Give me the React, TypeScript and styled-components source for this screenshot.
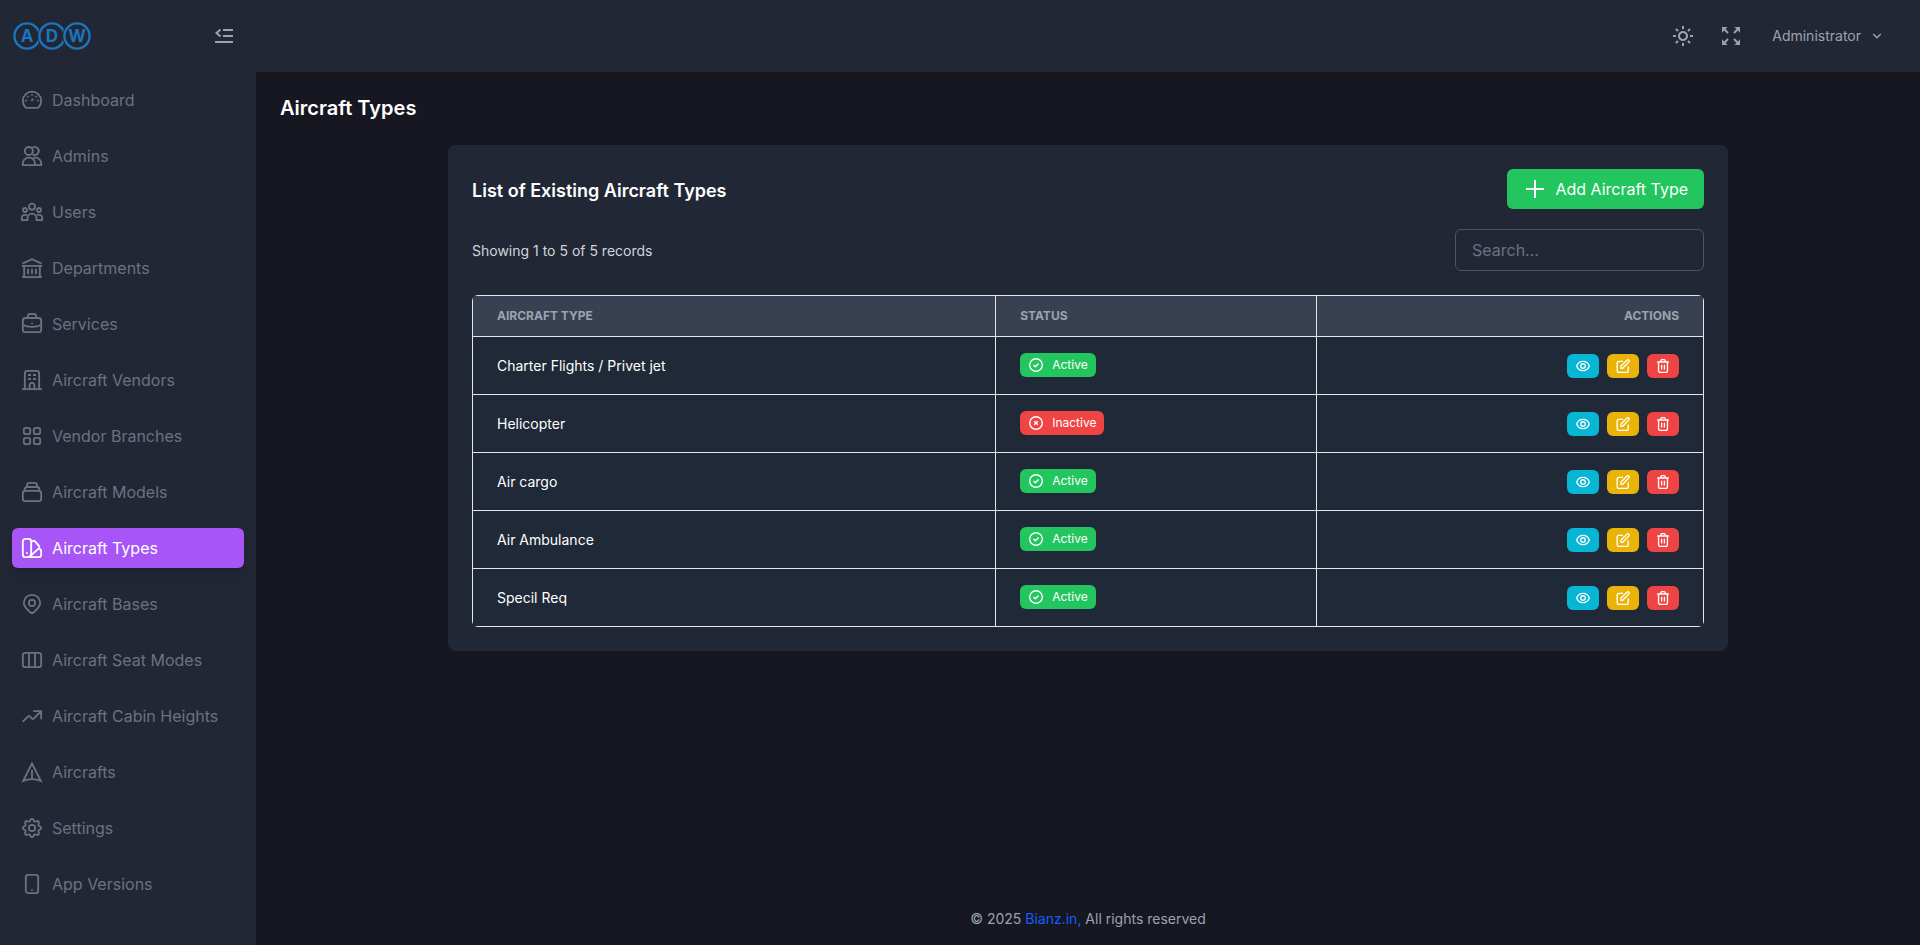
import React, { useState } from "react";
import styled, { createGlobalStyle, css } from "styled-components";
import { BiExpand, BiSun } from "react-icons/bi";
import { RiArrowDownSLine } from "react-icons/ri";

const color = {
  page: "#161721",
  panel: "#222736",
  row: "#1f2937",
  head: "#374151",
  line: "#e5e7eb",
  muted: "#6b7280",
  soft: "#9ca3af",
  purple: "#a855f7",
  green: "#22c55e",
  red: "#ef4444",
  cyan: "#06b6d4",
  yellow: "#eab308",
  link: "#155dfc",
  logo: "#1c75bc",
};

const GlobalStyle = createGlobalStyle`
  *, *::before, *::after { box-sizing: border-box; }
  body {
    margin: 0;
    background: ${color.page};
    color: #fff;
    font-family: Inter, "Liberation Sans", sans-serif;
    font-size: 16px;
    line-height: 24px;
  }
  button, input { font: inherit; color: inherit; }
  h1, h2, p { margin: 0; }
`;

const Shell = styled.div`
  display: grid;
  grid-template-columns: 256px minmax(0, 1fr);
  min-height: 100vh;
`;

const Sidebar = styled.aside`
  background: ${color.panel};
  padding: 0 12px 24px;
`;

const Brand = styled.div`
  display: flex;
  align-items: center;
  justify-content: space-between;
  height: 72px;
`;

const Main = styled.div`
  display: flex;
  flex-direction: column;
  min-height: 100vh;
`;

const IconButton = styled.button<{ $size: number }>`
  display: inline-flex;
  align-items: center;
  justify-content: center;
  width: ${(p) => p.$size}px;
  height: ${(p) => p.$size}px;
  padding: 0;
  border: 0;
  background: transparent;
  color: ${color.soft};
  cursor: pointer;
`;

const NavList = styled.ul`
  display: flex;
  flex-direction: column;
  gap: 16px;
  margin: 0;
  padding: 8px 0 0;
  list-style: none;
`;

const NavLink = styled.a<{ $active: boolean }>`
  display: flex;
  align-items: center;
  gap: 10px;
  height: 40px;
  padding: 0 10px;
  border-radius: 6px;
  color: ${color.muted};
  text-decoration: none;
  white-space: nowrap;
  ${(p) =>
    p.$active &&
    css`
      background: ${color.purple};
      color: #fff;
      box-shadow: 0 10px 15px -3px rgba(0, 0, 0, 0.1), 0 4px 6px -4px rgba(0, 0, 0, 0.1);
    `}
`;

const Glyph = styled.svg`
  flex: none;
  overflow: visible;
  fill: none;
  stroke: currentColor;
  stroke-width: 2.2;
`;

const Topbar = styled.header`
  display: flex;
  align-items: center;
  justify-content: flex-end;
  gap: 24px;
  height: 72px;
  padding: 0 30px;
  background: ${color.panel};
`;

const UserButton = styled.button`
  display: inline-flex;
  align-items: center;
  gap: 8px;
  padding: 0 5px;
  border: 0;
  background: transparent;
  color: ${color.soft};
  font-size: 14px;
  line-height: 20px;
  cursor: pointer;
`;

const Content = styled.main`
  flex: 1;
  padding: 24px;
`;

const PageTitle = styled.h1`
  margin-bottom: 24px;
  font-size: 20px;
  font-weight: 600;
  line-height: 25px;
`;

const Card = styled.section`
  max-width: 1280px;
  margin: 0 auto;
  padding: 24px;
  border-radius: 8px;
  background: ${color.panel};
`;

const CardRow = styled.div<{ $gap: number }>`
  display: flex;
  align-items: center;
  justify-content: space-between;
  margin-bottom: ${(p) => p.$gap}px;
`;

const CardTitle = styled.h2`
  padding-top: 4px;
  font-size: 18px;
  font-weight: 600;
  line-height: 28px;
`;

const AddButton = styled.button`
  display: inline-flex;
  align-items: center;
  gap: 8px;
  height: 40px;
  padding: 0 16px;
  border: 0;
  border-radius: 6px;
  background: ${color.green};
  color: #fff;
  cursor: pointer;
`;

const Summary = styled.p`
  padding-top: 2px;
  color: #d1d5db;
  font-size: 14px;
  line-height: 20px;
`;

const SearchInput = styled.input`
  width: 249px;
  height: 42px;
  padding: 0 16px;
  border: 1px solid #4b5563;
  border-radius: 6px;
  background: transparent;
  &::placeholder {
    color: ${color.muted};
    opacity: 1;
  }
`;

const TableFrame = styled.div`
  overflow: hidden;
  border-radius: 6px;
`;

const Table = styled.table`
  width: 100%;
  border-collapse: collapse;
  table-layout: fixed;
  background: ${color.row};
  font-size: 14px;
  line-height: 24px;
`;

const HeadCell = styled.th<{ $width: string; $right?: boolean }>`
  width: ${(p) => p.$width};
  padding: 12px 24px;
  border: 1px solid ${color.line};
  background: ${color.head};
  color: ${color.soft};
  font-size: 12px;
  font-weight: 700;
  line-height: 16px;
  text-align: ${(p) => (p.$right ? "right" : "left")};
  text-transform: uppercase;
`;

const Cell = styled.td`
  padding: 17px 24px 16px;
  border: 1px solid ${color.line};
`;

const StatusCell = styled(Cell)`
  padding: 16px 24px 17px;
`;

const Badge = styled.span<{ $active: boolean }>`
  display: flex;
  align-items: center;
  gap: 8px;
  width: fit-content;
  height: 24px;
  padding: 0 8px;
  border-radius: 6px;
  background: ${(p) => (p.$active ? color.green : color.red)};
  font-size: 12px;
  line-height: 16px;
`;

const Actions = styled.div`
  display: flex;
  justify-content: flex-end;
  gap: 8px;
`;

const ActionButton = styled.button<{ $bg: string }>`
  display: inline-flex;
  align-items: center;
  justify-content: center;
  width: 32px;
  height: 24px;
  padding: 0;
  border: 0;
  border-radius: 6px;
  background: ${(p) => p.$bg};
  color: #fff;
  cursor: pointer;
`;

const Footer = styled.footer`
  padding: 16px;
  color: ${color.soft};
  font-size: 14px;
  line-height: 20px;
  text-align: center;
`;

const FooterLink = styled.a`
  color: ${color.link};
  text-decoration: none;
`;

// Eight-lobed outline of the settings gear.
const gearOutline = (() => {
  const points: string[] = [];
  for (let i = 0; i < 96; i++) {
    const t = (i / 96) * Math.PI * 2;
    const r = 9.7 + 1.3 * Math.cos(8 * t);
    points.push(`${(12 + r * Math.sin(t)).toFixed(2)} ${(12 - r * Math.cos(t)).toFixed(2)}`);
  }
  return `M${points.join("L")}z`;
})();

const navIcons: Record<string, React.ReactNode> = {
  Dashboard: (
    <>
      <path d="M5.6 21.4h12.8c.6 0 1.1-.2 1.5-.7a11 11 0 1 0-15.8 0c.4.5.9.7 1.5.7z" />
      <path d="M12 5v2M6.600 7.400l1.200 1.200M17.400 7.400l-1.200 1.200M3.800 12.800h2M18.200 12.800h2M11.400 13.200l1.800-2.600" />
    </>
  ),
  Admins: (
    <>
      <circle cx="8.2" cy="6" r="4.8" />
      <path d="M12.6 2a4.8 4.8 0 1 1 0 8" />
      <path d="M1 23v-2a7 7 0 0 1 7-7h.6a7 7 0 0 1 7 7v2zM13.4 14H16a7 7 0 0 1 7 7v2h-7.4" />
    </>
  ),
  Users: (
    <>
      <circle cx="12" cy="5.6" r="3.6" />
      <circle cx="3.6" cy="9.6" r="2.4" />
      <circle cx="20.4" cy="9.6" r="2.4" />
      <path d="M-.2 21.8v-3a3.3 3.3 0 0 1 3.300-3.300H6M24.200 21.800v-3a3.300 3.300 0 0 0-3.300-3.300H18M6.600 21.800v-2.500a5.400 5.400 0 0 1 10.800 0v2.500M-1.200 21.800h9M16.200 21.800h9" />
    </>
  ),
  Departments: (
    <path d="M.4 6.8L12 1.4l11.6 5.4M0 9.4h24M0 23h24M2.6 9v14M21.4 9v14M7.2 13v6.4M12 13v6.4M16.8 13v6.4" />
  ),
  Services: (
    <>
      <rect x="1" y="4.8" width="22" height="17" rx="3" />
      <path d="M7 4.6V3a3 3 0 0 1 3-3h4a3 3 0 0 1 3 3v1.6M1 13.2c3 1.6 7 2.3 11 2.3s8-.7 11-2.3M12 10.4v2" />
    </>
  ),
  "Aircraft Vendors": (
    <path d="M3.4 23V4a3 3 0 0 1 3-3h11.2a3 3 0 0 1 3 3v19M0 23h24M7.2 6h3.6M13.2 6h3.6M7.2 10.8h3.6M13.2 10.8h3.6M9.2 23v-5.2a2.2 2.2 0 0 1 2.2-2.2h1.2a2.2 2.2 0 0 1 2.2 2.2V23" />
  ),
  "Vendor Branches": (
    <>
      <rect x="2.2" y="2.2" width="7.6" height="7.6" rx="2.4" />
      <rect x="14.2" y="2.2" width="7.6" height="7.6" rx="2.4" />
      <rect x="2.2" y="14.2" width="7.6" height="7.6" rx="2.4" />
      <rect x="14.2" y="14.2" width="7.6" height="7.6" rx="2.4" />
    </>
  ),
  "Aircraft Models": (
    <>
      <rect x="1" y="10.6" width="22" height="12.4" rx="3" />
      <path d="M3.2 10.4V9a3 3 0 0 1 3-3h11.6a3 3 0 0 1 3 3v1.4M6 6V4a3 3 0 0 1 3-3h6a3 3 0 0 1 3 3v2" />
    </>
  ),
  "Aircraft Types": (
    <>
      <path d="M4 1h4a3 3 0 0 1 3 3v14.4A4.6 4.6 0 0 1 6.4 23H4a3 3 0 0 1-3-3V4a3 3 0 0 1 3-3z" />
      <path d="M11 4.6l1.2-.7a3 3 0 0 1 4 .7l3.6 4.2a3 3 0 0 1-.3 4.2L9.4 22.2M18.6 13H20a3 3 0 0 1 3 3v4a3 3 0 0 1-3 3H6M6 17v2" />
    </>
  ),
  "Aircraft Bases": (
    <>
      <path d="M13.8 22.2a2.8 2.8 0 0 1-3.6 0C6.7 19.2 2.2 15.2 2.2 10.8a9.8 9.8 0 0 1 19.6 0c0 4.4-4.500 8.400-8 11.400z" />
      <circle cx="12" cy="10.8" r="3.8" />
    </>
  ),
  "Aircraft Seat Modes": (
    <>
      <rect x="1" y="3.4" width="22" height="17.2" rx="3" />
      <path d="M8.4 3.4v17.2M15.6 3.4v17.2" />
    </>
  ),
  "Aircraft Cabin Heights": (
    <path d="M.7 19l6.6-6.6a1.4 1.4 0 0 1 2 0l2.7 2.7a1.4 1.4 0 0 0 2 0L22.6 6.6M13.400 6.200H23v9.600" />
  ),
  Aircrafts: <path d="M12 1.8L1.4 22.7c3.4-1.4 7-2.1 10.6-2.1s7.2.7 10.6 2.1zM12 9.6v11" />,
  Settings: (
    <>
      <path d={gearOutline} />
      <circle cx="12" cy="12" r="3.8" />
    </>
  ),
  "App Versions": (
    <>
      <rect x="4.6" y="1" width="14.8" height="22" rx="3" />
      <path d="M12 18.2v2" />
    </>
  ),
};

const records = [
  { name: "Charter Flights / Privet jet", active: true },
  { name: "Helicopter", active: false },
  { name: "Air cargo", active: true },
  { name: "Air Ambulance", active: true },
  { name: "Specil Req", active: true },
];

const LogoLetter = styled.text`
  fill: ${color.logo};
  font-family: Inter, sans-serif;
  font-size: 17px;
  font-weight: 700;
  text-anchor: middle;
`;

const Logo = () => (
  <svg width="80" height="28" viewBox="0 0 80 28" role="img" aria-label="ADW">
    {[
      { x: 15, letter: "A" },
      { x: 40, letter: "D" },
      { x: 65, letter: "W" },
    ].map(({ x, letter }) => (
      <g key={letter}>
        <circle cx={x} cy="14" r="12.6" fill="none" stroke={color.panel} strokeWidth="4" />
        <circle cx={x} cy="14" r="12.6" fill="none" stroke={color.logo} strokeWidth="2.4" />
        <LogoLetter x={x} y="20">
          {letter}
        </LogoLetter>
      </g>
    ))}
  </svg>
);

const StatusIcon = ({ active }: { active: boolean }) => (
  <svg width="16" height="16" viewBox="0 0 16 16" fill="none" stroke="currentColor" strokeWidth="1.4" aria-hidden="true">
    <circle cx="8" cy="8" r="6.3" />
    <path d={active ? "M5.5 8l1.8 1.8 3.3-3.3" : "M6.2 6.2l3.6 3.6M9.8 6.2L6.2 9.8"} />
  </svg>
);

const ActionGlyph = ({ children }: { children: React.ReactNode }) => (
  <svg width="14" height="14" viewBox="0 0 24 24" fill="none" stroke="currentColor" strokeWidth="2.3" aria-hidden="true">
    {children}
  </svg>
);

const RowActions = ({ name }: { name: string }) => (
  <Actions>
    <ActionButton $bg={color.cyan} aria-label={`View ${name}`}>
      <ActionGlyph>
        <path d="M1.2 12C2.8 7.2 7 4 12 4s9.2 3.2 10.8 8c-1.6 4.8-5.8 8-10.8 8S2.8 16.8 1.2 12z" />
        <circle cx="12" cy="12" r="3.9" />
      </ActionGlyph>
    </ActionButton>
    <ActionButton $bg={color.yellow} aria-label={`Edit ${name}`}>
      <ActionGlyph>
        <path d="M12 4H5a3 3 0 0 0-3 3v13a3 3 0 0 0 3 3h13a3 3 0 0 0 3-3v-7" />
        <path d="M8.6 16v-3.8L19 1.9a2.2 2.2 0 0 1 3.1 3.1L11.6 16z" />
      </ActionGlyph>
    </ActionButton>
    <ActionButton $bg={color.red} aria-label={`Delete ${name}`}>
      <ActionGlyph>
        <path d="M2 5.2h20M8 5V4a3 3 0 0 1 3-3h2a3 3 0 0 1 3 3v1M4.4 5.2V20a3 3 0 0 0 3 3h9.2a3 3 0 0 0 3-3V5.2M9.6 10v8M14.4 10v8" />
      </ActionGlyph>
    </ActionButton>
  </Actions>
);

export default function App() {
  const [query, setQuery] = useState("");
  const visible = records.filter((r) => r.name.toLowerCase().includes(query.toLowerCase()));

  return (
    <>
      <GlobalStyle />
      <Shell>
        <Sidebar>
          <Brand>
            <Logo />
            <IconButton $size={40} aria-label="Collapse menu">
              <svg width="18" height="14" viewBox="0 0 18 14" fill="none" stroke="currentColor" strokeWidth="2" aria-hidden="true">
                <path d="M8 1h10M8 7h10M0 13h18" />
                <path d="M5.5.5L1.4 4l4.1 3.5" />
              </svg>
            </IconButton>
          </Brand>
          <nav aria-label="Main">
            <NavList>
              {Object.entries(navIcons).map(([label, icon]) => {
                const active = label === "Aircraft Types";
                return (
                  <li key={label}>
                    <NavLink href="#" $active={active} aria-current={active ? "page" : undefined}>
                      <Glyph width="20" height="20" viewBox="0 0 24 24" aria-hidden="true">
                        {icon}
                      </Glyph>
                      {label}
                    </NavLink>
                  </li>
                );
              })}
            </NavList>
          </nav>
        </Sidebar>

        <Main>
          <Topbar>
            <IconButton $size={24} aria-label="Toggle theme">
              <BiSun size={24} />
            </IconButton>
            <IconButton $size={24} aria-label="Full screen">
              <BiExpand size={24} />
            </IconButton>
            <UserButton>
              Administrator
              <RiArrowDownSLine size={16} />
            </UserButton>
          </Topbar>

          <Content>
            <PageTitle>Aircraft Types</PageTitle>
            <Card>
              <CardRow $gap={20}>
                <CardTitle>List of Existing Aircraft Types</CardTitle>
                <AddButton>
                  <svg width="24" height="24" viewBox="0 0 24 24" stroke="currentColor" strokeWidth="2" aria-hidden="true">
                    <path d="M12 3v18M3 12h18" />
                  </svg>
                  Add Aircraft Type
                </AddButton>
              </CardRow>
              <CardRow $gap={24}>
                <Summary>Showing 1 to 5 of 5 records</Summary>
                <SearchInput
                  type="text"
                  aria-label="Search"
                  placeholder="Search..."
                  value={query}
                  onChange={(e) => setQuery(e.target.value)}
                />
              </CardRow>
              <TableFrame>
                <Table>
                  <thead>
                    <tr>
                      <HeadCell $width="42.5%">Aircraft Type</HeadCell>
                      <HeadCell $width="26.1%">Status</HeadCell>
                      <HeadCell $width="31.4%" $right>
                        Actions
                      </HeadCell>
                    </tr>
                  </thead>
                  <tbody>
                    {visible.map((record) => (
                      <tr key={record.name}>
                        <Cell>{record.name}</Cell>
                        <StatusCell>
                          <Badge $active={record.active}>
                            <StatusIcon active={record.active} />
                            {record.active ? "Active" : "Inactive"}
                          </Badge>
                        </StatusCell>
                        <Cell>
                          <RowActions name={record.name} />
                        </Cell>
                      </tr>
                    ))}
                  </tbody>
                </Table>
              </TableFrame>
            </Card>
          </Content>

          <Footer>
            © 2025 <FooterLink href="#">Bianz.in,</FooterLink> All rights reserved
          </Footer>
        </Main>
      </Shell>
    </>
  );
}
